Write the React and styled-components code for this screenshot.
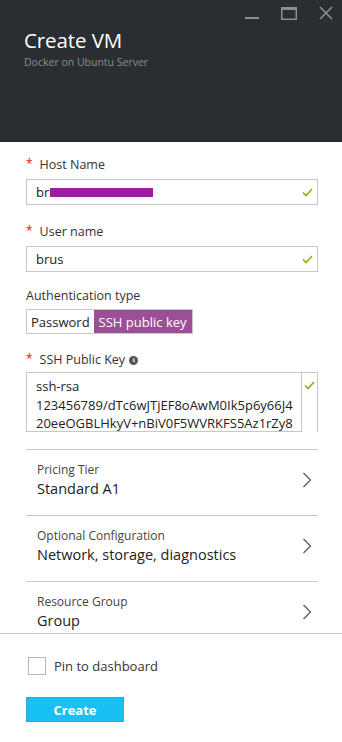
import React from "react";
import styled, { createGlobalStyle } from "styled-components";

const Global = createGlobalStyle`
  html, body { margin: 0; padding: 0; background: #fff; }
  body { font-family: "Open Sans", "Noto Sans", sans-serif; color: #333; }
  * { box-sizing: border-box; }
`;

const Blade = styled.div`
  width: 342px;
  height: 742px;
  display: flex;
  flex-direction: column;
  overflow: hidden;
`;

const Header = styled.header`
  height: 142px;
  flex-shrink: 0;
  background: #2a2d32;
  padding: 27px 24px 0;
  position: relative;
`;

const Controls = styled.div`
  position: absolute;
  top: 6px;
  right: 9px;
  display: flex;
  gap: 22px;
  align-items: flex-start;
`;

const Title = styled.h1`
  margin: 0;
  font-size: 20.5px;
  font-weight: 400;
  line-height: 26px;
  color: #fff;
  letter-spacing: -0.1px;
`;

const Subtitle = styled.div`
  font-size: 10.5px;
  line-height: 14px;
  color: #8c8f94;
  margin-top: 2px;
`;

const Scroll = styled.div`
  flex: 1;
  overflow: hidden;
  padding: 14px 24px 0 26px;
`;

const Field = styled.div`
  margin-bottom: ${(p) => p.$gap ?? 18}px;
`;

const Label = styled.div`
  font-size: 12.5px;
  line-height: 18px;
  color: #333;
  margin-bottom: ${(p) => p.$mb || 5}px;
  display: flex;
  align-items: center;
  gap: 4px;
`;

const Star = styled.span`
  color: #e81123;
  font-size: 12px;
  margin-right: 7px;
  position: relative;
  top: -1px;
`;

const InputBox = styled.div`
  height: 26px;
  border: 1px solid #c8c8c8;
  display: flex;
  align-items: center;
  padding: 0 4px 0 9px;
  font-size: 13px;
  color: #222;
`;

const Value = styled.span`
  flex: 1;
  display: flex;
  align-items: center;
`;

const Redact = styled.span`
  display: inline-block;
  width: 103px;
  height: 9px;
  background: #9c1f98;
  margin-left: 1px;
`;

const Toggle = styled.div`
  display: inline-flex;
  border: 1px solid #c8c8c8;
  height: 25px;
`;

const Seg = styled.div`
  padding: 0 ${(p) => (p.$on ? 5 : 4)}px;
  display: flex;
  align-items: center;
  font-size: 13px;
  color: ${(p) => (p.$on ? "#fff" : "#222")};
  background: ${(p) => (p.$on ? "#9b4f96" : "#fff")};
`;

const KeyWrap = styled.div`
  display: flex;
  border-top: 1px solid #c8c8c8;
  border-right: 1px solid #c8c8c8;
  border-left: 1px solid #c8c8c8;
  height: 60px;
`;

const KeyText = styled.div`
  width: 275px;
  border-right: 1px solid #c8c8c8;
  border-bottom: 1px solid #c8c8c8;
  padding: 4px 9px 0;
  font-size: 13px;
  line-height: 18.5px;
  color: #222;
  white-space: nowrap;
  overflow: hidden;
`;

const KeyCheck = styled.div`
  flex: 1;
  display: flex;
  justify-content: center;
  padding-top: 8px;
`;

const Info = styled.span`
  width: 9px;
  height: 9px;
  border-radius: 50%;
  background: #555;
  color: #fff;
  font-size: 7px;
  font-weight: 700;
  display: inline-flex;
  align-items: center;
  justify-content: center;
  font-family: "Liberation Serif", serif;
`;

const Rows = styled.div`
  margin-top: 17px;
`;

const Row = styled.div`
  border-top: 1px solid #c8c8c8;
  height: 66px;
  display: flex;
  align-items: center;
  padding: 0 6px 0 11px;
`;

const RowText = styled.div`
  flex: 1;
  padding-bottom: 4px;
`;

const RowLabel = styled.div`
  font-size: 12px;
  line-height: 17px;
  color: #444;
`;

const RowValue = styled.div`
  font-size: 14.5px;
  line-height: 22px;
  color: #222;
`;

const Arrow = styled.span`
  display: flex;
  margin-bottom: 6px;
`;

const Footer = styled.footer`
  height: 109px;
  flex-shrink: 0;
  border-top: 1px solid #c8c8c8;
  padding: 23px 24px 0 26px;
`;

const Pin = styled.label`
  display: flex;
  align-items: center;
  gap: 8px;
  font-size: 13px;
  color: #333;
  margin-left: 2px;
`;

const Box = styled.span`
  width: 18px;
  height: 18px;
  border: 1px solid #b8b8b8;
  background: #fff;
`;

const Button = styled.button`
  margin-top: 22px;
  width: 98px;
  height: 25px;
  border: 1px solid #2aa7d6;
  background: #18c1f3;
  color: #fff;
  font-family: inherit;
  font-size: 13px;
  font-weight: 700;
  padding: 0;
`;

const Check = () => (
  <svg width="11" height="9" viewBox="0 0 11 9">
    <polyline points="1,4.5 4,7.5 10,1" fill="none" stroke="#7fba00" strokeWidth="1.6" />
  </svg>
);

const Chevron = () => (
  <Arrow>
    <svg width="10" height="16" viewBox="0 0 10 16">
      <polyline points="1.5,1 8.5,8 1.5,15" fill="none" stroke="#555" strokeWidth="1.2" />
    </svg>
  </Arrow>
);

const Rowz = [
  ["Pricing Tier", "Standard A1"],
  ["Optional Configuration", "Network, storage, diagnostics"],
  ["Resource Group", "Group"],
];

export default function App() {
  return (
    <Blade>
      <Global />
      <Header>
        <Controls>
          <svg width="14" height="14" viewBox="0 0 14 14">
            <rect x="0" y="11" width="14" height="2" fill="#8c8f94" />
          </svg>
          <svg width="16" height="14" viewBox="0 0 16 14">
            <rect x="0.75" y="1.75" width="14.5" height="11.5" fill="none" stroke="#8c8f94" strokeWidth="1.5" />
            <rect x="0.75" y="1" width="14.5" height="3" fill="#8c8f94" />
          </svg>
          <svg width="14" height="14" viewBox="0 0 14 14">
            <path d="M1 1L13 13M13 1L1 13" stroke="#8c8f94" strokeWidth="1.6" />
          </svg>
        </Controls>
        <Title>Create VM</Title>
        <Subtitle>Docker on Ubuntu Server</Subtitle>
      </Header>
      <Scroll>
        <Field>
          <Label><span><Star>*</Star>Host Name</span></Label>
          <InputBox>
            <Value>br<Redact /></Value>
            <Check />
          </InputBox>
        </Field>
        <Field $gap={15}>
          <Label><span><Star>*</Star>User name</span></Label>
          <InputBox>
            <Value>brus</Value>
            <Check />
          </InputBox>
        </Field>
        <Field $gap={17}>
          <Label $mb={4}>Authentication type</Label>
          <Toggle>
            <Seg>Password</Seg>
            <Seg $on>SSH public key</Seg>
          </Toggle>
        </Field>
        <Field $gap={0}>
          <Label $mb={3}><span><Star>*</Star>SSH Public Key</span><Info>i</Info></Label>
          <KeyWrap>
            <KeyText>
              ssh-rsa<br />
              123456789/dTc6wJTjEF8oAwM0Ik5p6y66J4<br />
              20eeOGBLHkyV+nBiV0F5WVRKFS5Az1rZy8
            </KeyText>
            <KeyCheck><Check /></KeyCheck>
          </KeyWrap>
        </Field>
        <Rows>
          {Rowz.map(([l, v]) => (
            <Row key={l}>
              <RowText>
                <RowLabel>{l}</RowLabel>
                <RowValue>{v}</RowValue>
              </RowText>
              <Chevron />
            </Row>
          ))}
        </Rows>
      </Scroll>
      <Footer>
        <Pin><Box />Pin to dashboard</Pin>
        <Button>Create</Button>
      </Footer>
    </Blade>
  );
}
